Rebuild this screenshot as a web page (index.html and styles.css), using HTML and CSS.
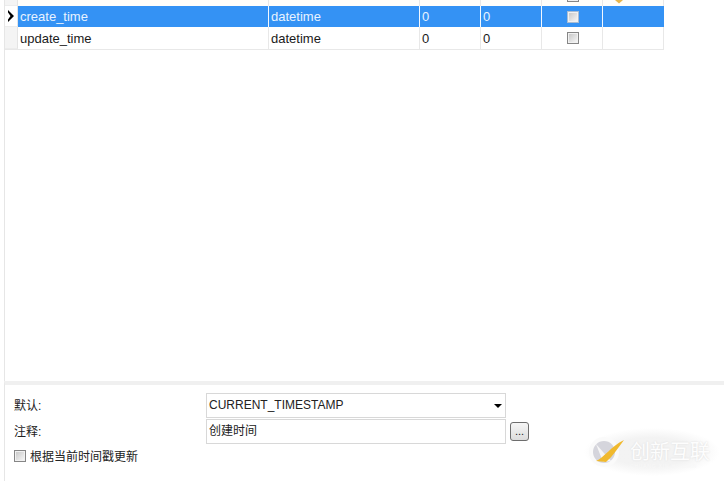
FILE: index.html
```html
<!DOCTYPE html>
<html lang="zh">
<head>
<meta charset="utf-8">
<title>表设计</title>
<link rel="stylesheet" href="styles.css">
</head>
<body>
<div class="app">
  <div class="grid-panel">
    <div class="grid">
      <div class="row row-clip">
        <div class="head"></div><div class="cell name"></div><div class="cell type"></div><div class="cell num"></div><div class="cell num"></div>
        <div class="cell check"><span class="box box-cut"></span></div>
        <div class="cell key"><svg class="key-icon" width="10" height="4" viewBox="0 0 10 4"><path d="M1 0 L9 0 L5 3.5 Z" fill="#e8b64a"/></svg></div>
      </div>
      <div class="row selected">
        <div class="head"><svg width="8" height="12" viewBox="0 0 8 12"><path d="M1 0 L7 6 L1 12 L1 9.5 L3.5 6 L1 2.5 Z" fill="#000"/></svg></div>
        <div class="cell name">create_time</div><div class="cell type">datetime</div><div class="cell num">0</div><div class="cell num">0</div>
        <div class="cell check"><span class="box"></span></div><div class="cell key"></div>
      </div>
      <div class="row">
        <div class="head"></div>
        <div class="cell name">update_time</div><div class="cell type">datetime</div><div class="cell num">0</div><div class="cell num">0</div>
        <div class="cell check"><span class="box"></span></div><div class="cell key"></div>
      </div>
    </div>
  </div>
  <div class="detail">
    <div class="field-row">
      <label class="label">默认:</label>
      <div class="field select"><span>CURRENT_TIMESTAMP</span><i class="arrow"></i></div>
    </div>
    <div class="field-row field-row-second">
      <label class="label">注释:</label>
      <div class="field">创建时间</div>
      <button class="more">...</button>
    </div>
    <div class="update-row"><span class="box box-small"></span><span>根据当前时间戳更新</span></div>
  </div>
  <div class="watermark">
    <svg width="38" height="36" viewBox="0 0 38 36">
      <circle cx="17" cy="18" r="13" fill="#d5d5dc" stroke="#fafafa" stroke-width="4"/>
      <path d="M9 10 L24 27 L16 28 Z" fill="#f6f6f6"/>
      <path d="M9 27 C17 24 24 12 37 6 C31 14 26 22 19 28 Z" fill="#f0b92e"/>
    </svg>
    <span class="wm-text">创新互联</span>
    <span class="wm-sub">CHUANG XIN HU LIAN</span>
  </div>
</div>
</body>
</html>
```
FILE: styles.css
```css
* { box-sizing: border-box; }
html, body { margin: 0; padding: 0; }
body {
  width: 724px;
  height: 481px;
  overflow: hidden;
  background: #fff;
  font-family: "Liberation Sans", "Noto Sans CJK SC", sans-serif;
  font-size: 13px;
  color: #1a1a1a;
}
.app {
  position: relative;
  width: 724px;
  height: 481px;
  display: flex;
  flex-direction: column;
}
.grid-panel {
  height: 381px;
  flex: none;
  border-left: 1px solid #e6e6e6;
  margin-left: 4px;
}
.grid { width: 659px; border-bottom: 1px solid #e8e8e8; }
.row {
  display: grid;
  grid-template-columns: 13px 251px 151px 61px 61px 61px 61px;
  height: 21px;
  line-height: 21px;
}
.row + .row:last-child { height: 22px; line-height: 23px; }
.row-clip { height: 6px; background: #fffefa; overflow: hidden; }
.head {
  background: #f4f4f4;
  border-right: 1px solid #e4e4e4;
  border-bottom: 1px solid #ececec;
  display: flex;
  align-items: center;
  justify-content: center;
}
.selected .head { background: #fff; }
.cell {
  padding-left: 2px;
  border-right: 1px solid #e8e8e8;
  white-space: nowrap;
  overflow: hidden;
}
.check { display: flex; justify-content: center; align-items: center; padding-left: 1px; }
.row-clip .check { align-items: flex-start; }
.selected { background: #3492f4; color: #e8f3ff; }
.selected .cell { border-right-color: #f2f8ff; }
.selected .key { border-right-color: #3492f4; }
.box {
  width: 12px;
  height: 12px;
  display: block;
  flex: none;
  border: 1px solid #868686;
  background: linear-gradient(135deg, #c4c4c4, #fafafa);
  box-shadow: inset 0 0 0 1px #f1f1f1;
}
.selected .box { border-color: #a9bcd2; }
.box-cut { margin-top: -10px; }
.key { padding-left: 11px; line-height: 0; }
.key-icon { display: block; }
.detail {
  flex: 1;
  border-top: 4px solid #f0f0f0;
  border-left: 1px solid #e6e6e6;
  margin-left: 4px;
  padding: 8px 0 0 9px;
  font-size: 12px;
}
.field-row { display: flex; align-items: center; height: 25px; }
.field-row-second { margin-top: 1px; }
.label { width: 192px; flex: none; font-size: 12px; margin-top: -3px; color: #222; }
.field {
  width: 300px;
  height: 25px;
  flex: none;
  border: 1px solid #d8d8d8;
  background: #fff;
  padding-left: 2px;
  line-height: 23px;
  font-size: 12px;
  color: #222;
}
.select { display: flex; justify-content: space-between; align-items: center; padding-right: 3px; }
.select span { margin-top: -1px; }
.arrow {
  width: 0;
  height: 0;
  border-left: 4px solid transparent;
  border-right: 4px solid transparent;
  border-top: 4px solid #000;
}
.more {
  width: 19px;
  height: 19px;
  margin-left: 4px;
  padding: 0;
  border: 1px solid #6d6d6d;
  border-radius: 3px;
  background: linear-gradient(#f6f6f6, #dcdcdc);
  font-family: "Liberation Sans", sans-serif;
  font-size: 11px;
  line-height: 17px;
  color: #222;
}
.update-row { display: flex; align-items: center; gap: 4px; margin-top: 3px; color: #222; }
.watermark {
  position: absolute;
  left: 584px;
  top: 428px;
  width: 136px;
  height: 48px;
  background: radial-gradient(closest-side, rgba(215,215,215,.3) 60%, rgba(255,255,255,0));
}
.watermark svg { position: absolute; left: 3px; top: 6px; }
.wm-text {
  position: absolute;
  left: 46px;
  top: 12px;
  font-size: 20px;
  line-height: 24px;
  color: #fdfdfd;
  text-shadow: 0 0 2px #dadada;
  white-space: nowrap;
}
.wm-sub {
  position: absolute;
  left: 46px;
  top: 35px;
  font-size: 5px;
  line-height: 6px;
  letter-spacing: .8px;
  color: #f8f8f8;
  white-space: nowrap;
}
```
